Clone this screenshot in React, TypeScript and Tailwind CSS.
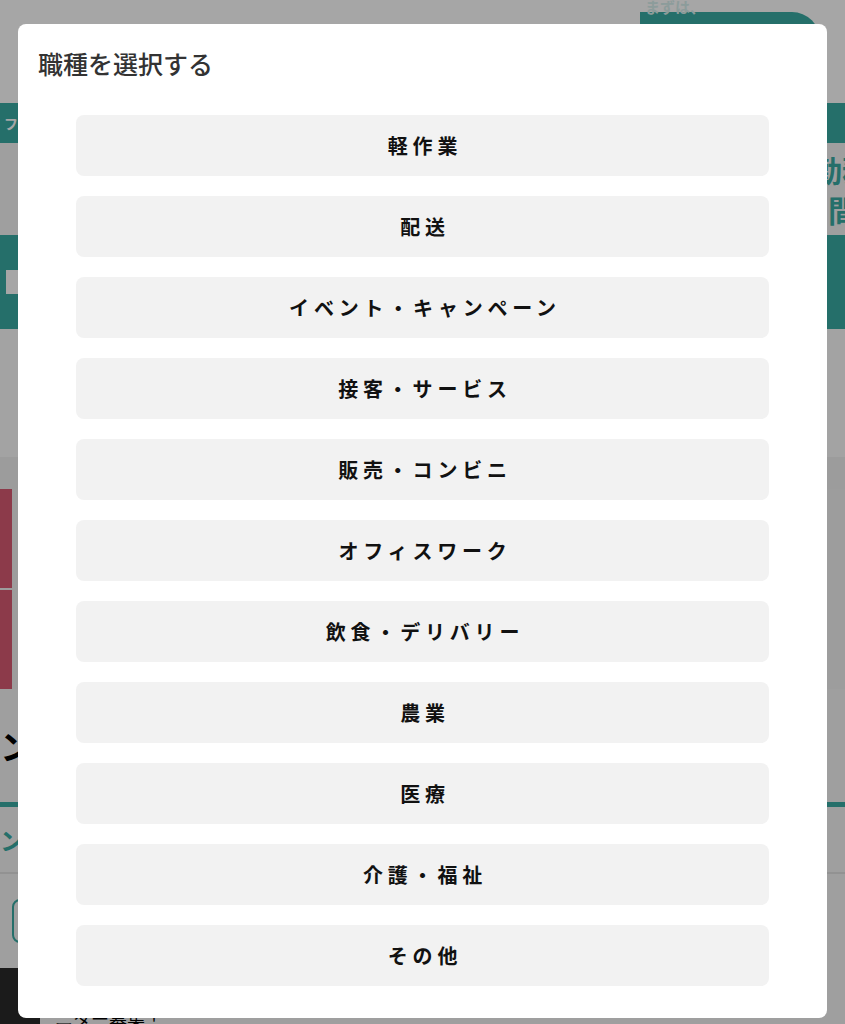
// 職種選択モーダル — 背景ページの上にオーバーレイで表示

const JOB_TYPES = [
  "軽作業",
  "配送",
  "イベント・キャンペーン",
  "接客・サービス",
  "販売・コンビニ",
  "オフィスワーク",
  "飲食・デリバリー",
  "農業",
  "医療",
  "介護・福祉",
  "その他",
];

const FONT = "font-['Noto_Sans_CJK_JP','Noto_Sans',sans-serif]";

/** 背景のページ(モーダルの下で暗くなっている部分) */
function BackgroundPage() {
  return (
    <div className={`${FONT} flex min-h-[1024px] flex-col overflow-hidden bg-[#f4f4f4]`}>
      <header className="relative h-[103px] bg-white">
        <div className="absolute right-[25px] top-[12px] h-[100px] w-[180px] rounded-tr-[28px] bg-[#3aaba3]" />
        <span className="absolute left-[645px] top-[-4px] text-[15px] font-bold text-[#d8f0ee]">
          まずは、
        </span>
      </header>
      <div className="flex h-[40px] items-center bg-[#3aaba3] px-1 text-[14px] font-bold text-white">
        ファ
      </div>
      <div className="flex h-[92px] items-center overflow-hidden bg-[#f4f4f4] pl-[812px]">
        <div className="flex shrink-0 flex-col text-[30px] font-bold leading-[40px] text-[#3aaba3]">
          <span className="whitespace-nowrap">勤務</span>
          <span className="whitespace-nowrap pl-[16px]">間</span>
        </div>
      </div>
      <div className="flex h-[94px] items-center bg-[#3aaba3] px-[6px]">
        <div className="h-[24px] w-[30px] bg-white" />
      </div>
      <div className="h-[128px] bg-[#fafafa]" />
      <div className="h-[32px] bg-[#f0f0f0]" />
      <div className="flex h-[200px] bg-[#f2f2f2]">
        <div className="flex w-[12px] flex-col gap-[2px]">
          <div className="flex-1 bg-[#d85a72]" />
          <div className="flex-1 bg-[#d85a72]" />
        </div>
      </div>
      <div className="flex h-[113px] items-center text-[34px] font-bold text-black">
        ンー
      </div>
      <div className="h-[5px] bg-[#3aaba3]" />
      <div className="flex h-[65px] items-center text-[24px] font-bold text-[#3aaba3]">
        ン
      </div>
      <div className="h-[2px] bg-[#e0e0e0]" />
      <div className="flex h-[94px] items-center px-[12px]">
        <div className="h-[44px] w-[80px] rounded-[8px] border-2 border-[#3aaba3]" />
      </div>
      <div className="flex h-[60px] items-start">
        <div className="h-full w-[40px] bg-[#2a2a2a]" />
        <span className="pl-[15px] pt-[38px] text-[18px] leading-[24px] text-black">
          ニター募集！
        </span>
      </div>
    </div>
  );
}

function JobTypeModal() {
  return (
    <div className="fixed inset-0 bg-black/35">
      <div
        className={`${FONT} absolute left-[18px] top-[24px] flex w-[809px] flex-col rounded-[8px] bg-white pb-[32px] pt-[22px]`}
      >
        <h2 className="pl-[20px] text-[25px] font-medium leading-[34px] text-[#333]">
          職種を選択する
        </h2>
        <ul className="mt-[35px] flex flex-col gap-[20px] px-[58px]">
          {JOB_TYPES.map((name) => (
            <li key={name}>
              <button
                type="button"
                className="flex h-[61px] w-full items-center justify-center rounded-[8px] bg-[#f2f2f2] pl-[5px] text-[20px] font-bold tracking-[0.24em] text-[#111]"
              >
                {name}
              </button>
            </li>
          ))}
        </ul>
      </div>
    </div>
  );
}

export default function App() {
  return (
    <div className="relative">
      <BackgroundPage />
      <JobTypeModal />
    </div>
  );
}
